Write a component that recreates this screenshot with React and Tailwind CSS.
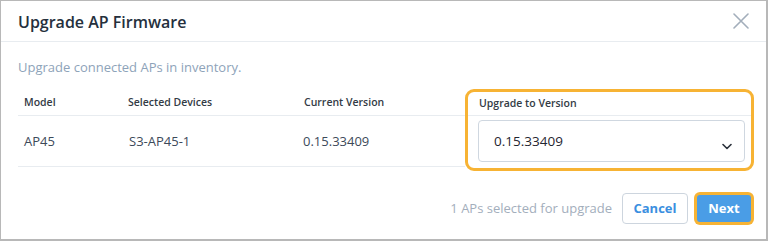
import React from "react";

const rows = [{ model: "AP45", device: "S3-AP45-1", current: "0.15.33409" }];

const App = () => {
  return (
    <div
      className="w-[768px] h-[241px] bg-white border-l border-t border-r-2 border-b-2 border-[#b8b8b8] flex flex-col text-[#3d4a5a]"
      style={{ fontFamily: '"Open Sans", "Noto Sans", sans-serif' }}
    >
      {/* Header */}
      <div className="h-[41px] shrink-0 flex items-center justify-between pl-[17px] pr-[17px] pt-[2px] border-b border-[#e8ecf0]">
        <h2 className="text-[16px] font-semibold text-[#25303d]">Upgrade AP Firmware</h2>
        <svg width="16" height="16" viewBox="0 0 16 16" className="text-[#a3aebb] -mt-[2px]">
          <path d="M1 1L15 15M15 1L1 15" stroke="currentColor" strokeWidth="1.6" strokeLinecap="round" />
        </svg>
      </div>

      {/* Body */}
      <div className="pl-[17px] pr-[12px] flex flex-col">
        <p className="text-[13px] text-[#8ea3b9] h-[19px] mt-[16px] leading-[19px]">
          Upgrade connected APs in inventory.
        </p>

        <div className="flex items-start mt-[12px]">
          <div className="w-[447px] flex flex-col">
            <div className="grid grid-cols-[105px_175px_167px] h-[27px] pt-[2px] items-center border-b border-[#e8ecf0] text-[10.5px] font-semibold text-[#333b45]">
              <span className="pl-[6px]">Model</span>
              <span className="pl-[5px]">Selected Devices</span>
              <span className="pl-[6px]">Current Version</span>
            </div>
            {rows.map((r) => (
              <div
                key={r.device}
                className="grid grid-cols-[105px_175px_167px] h-[51px] pt-[2px] items-center border-b border-[#e8ecf0] text-[13px] text-[#3d4a5a]"
              >
                <span className="pl-[6px]">{r.model}</span>
                <span className="pl-[6px]">{r.device}</span>
                <span className="pl-[5px]">{r.current}</span>
              </div>
            ))}
          </div>

          {/* Highlighted column */}
          <div className="w-[290px] h-[82px] border-[3px] border-[#f7b334] rounded-[9px] flex flex-col">
            <div className="h-[24px] shrink-0 flex items-center pl-[11px] pt-[1px] border-b border-[#e8ecf0] text-[10.5px] font-semibold text-[#333b45]">
              Upgrade to Version
            </div>
            <div className="pl-[10px] pr-[6px] pt-[4px]">
              <div className="h-[42px] border border-[#cfd7e0] rounded-[4px] flex items-center justify-between pl-[15px] pr-[12px]">
                <span className="text-[13.5px] text-[#1f2630]">0.15.33409</span>
                <svg width="10" height="7" viewBox="0 0 10 7" className="mt-[10px]">
                  <path d="M1 1.5L5 5.5L9 1.5" fill="none" stroke="#2a313a" strokeWidth="1.6" strokeLinecap="round" strokeLinejoin="round" />
                </svg>
              </div>
            </div>
          </div>
        </div>

        {/* Footer */}
        <div className="flex items-center justify-end mt-[21px]">
          <span className="text-[13px] text-[#a3aebc] mr-[10px]">1 APs selected for upgrade</span>
          <button className="w-[66px] h-[31px] border border-[#cdd5de] rounded-[4px] bg-white text-[13px] font-bold text-[#3b8fe0]">
            Cancel
          </button>
          <div className="ml-[6px] p-[3px] rounded-[6px] bg-[#f7b334]">
            <button className="w-[54px] h-[27px] rounded-[3px] bg-[#4a9de6] text-[13px] font-bold text-white">
              Next
            </button>
          </div>
        </div>
      </div>
    </div>
  );
};

export default App;
